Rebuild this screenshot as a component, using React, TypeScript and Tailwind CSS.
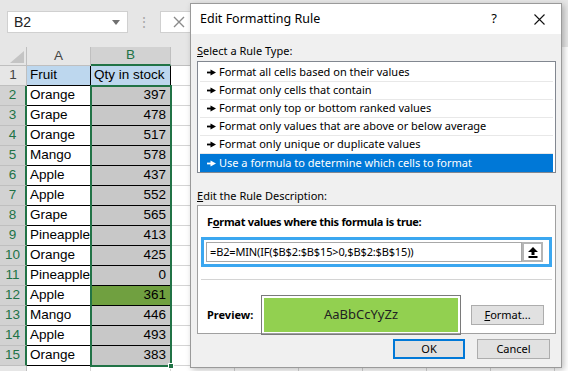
import React from 'react';

const rows: [string, string][] = [
    ['Orange', '397'],
    ['Grape', '478'],
    ['Orange', '517'],
    ['Mango', '578'],
    ['Apple', '437'],
    ['Apple', '552'],
    ['Grape', '565'],
    ['Pineapple', '413'],
    ['Orange', '425'],
    ['Pineapple', '0'],
    ['Apple', '361'],
    ['Mango', '446'],
    ['Apple', '493'],
    ['Orange', '383'],
];

const ruleTypes = [
    'Format all cells based on their values',
    'Format only cells that contain',
    'Format only top or bottom ranked values',
    'Format only values that are above or below average',
    'Format only unique or duplicate values',
    'Use a formula to determine which cells to format',
];

const extraCols = ['C', 'D', 'E', 'F', 'G', 'H'];

function Bullet({ white }: { white?: boolean }) {
    const c = white ? '#ffffff' : '#000000';
    return (
        <svg width="9" height="7" viewBox="0 0 9 7" className="shrink-0">
            <rect x="0" y="2.6" width="4" height="1.8" fill={c} />
            <polygon points="3.5,0.5 9,3.5 3.5,6.5" fill={c} />
        </svg>
    );
}

function Sheet() {
    return (
        <div className="w-[568px] h-[371px] overflow-hidden bg-white" style={{ fontFamily: '"Liberation Sans", Arial, sans-serif' }}>
            {/* formula bar */}
            <div className="h-[47px] bg-[#e6e6e6] flex items-start pt-[11px] pl-[7px]">
                <div className="w-[121px] h-[22px] bg-white border border-[#d0d0d0] flex items-center justify-between pl-[6px] pr-[7px] text-[14px] text-[#222]">
                    <span>B2</span>
                    <svg width="8" height="5" viewBox="0 0 8 5"><polygon points="0,0 8,0 4,5" fill="#707070" /></svg>
                </div>
                <div className="w-[32px] h-[22px] flex items-center justify-center text-[#a8a8a8] text-[14px]">⋮</div>
                <div className="w-[60px] h-[22px] bg-white border border-[#d0d0d0] flex items-center pl-[12px]">
                    <svg width="12" height="12" viewBox="0 0 12 12"><path d="M1 1L11 11M11 1L1 11" stroke="#8a8a8a" strokeWidth="1.4" /></svg>
                </div>
            </div>

            {/* column headers */}
            <div className="flex h-[19px] text-[13.5px]">
                <div className="w-[27px] shrink-0 bg-[#e6e6e6] border-r border-b border-[#bfbfbf] relative overflow-hidden">
                    <svg width="14" height="12" viewBox="0 0 14 12" className="absolute right-[2px] bottom-[2px]"><polygon points="14,0 14,12 0,12" fill="#c4c4c4" /></svg>
                </div>
                <div className="w-[64px] shrink-0 bg-[#e6e6e6] border-r border-b border-[#bfbfbf] flex items-center justify-center text-[#444]">A</div>
                <div className="w-[80px] shrink-0 bg-[#d2d2d2] border-r border-[#bfbfbf] border-b-2 border-b-[#217346] flex items-center justify-center text-[#217346]">B</div>
                {extraCols.map((c) => (
                    <div key={c} className="w-[64px] shrink-0 bg-[#e6e6e6] border-r border-b border-[#bfbfbf] flex items-center justify-center text-[#444]">{c}</div>
                ))}
            </div>

            {/* row 1 */}
            <div className="flex h-[20px] text-[13.5px]">
                <div className="w-[27px] shrink-0 bg-[#e6e6e6] border-r border-b border-[#bfbfbf] flex items-center justify-center text-[#444]">1</div>
                <div className="w-[64px] shrink-0 bg-[#bdd7ee] border-r border-b border-black flex items-center pl-[3px]">Fruit</div>
                <div className="w-[80px] shrink-0 bg-[#bdd7ee] border-r border-b border-black flex items-center pl-[3px] whitespace-nowrap overflow-hidden">Qty in stock</div>
                {extraCols.map((c) => (
                    <div key={c} className="w-[64px] shrink-0 border-r border-b border-[#d4d4d4]" />
                ))}
            </div>

            {/* data rows */}
            {rows.map(([fruit, qty], i) => (
                <div key={i} className="flex h-[20px] text-[13.5px]">
                    <div className="w-[27px] shrink-0 bg-[#d2d2d2] border-r-2 border-r-[#217346] border-b border-b-[#bfbfbf] flex items-center justify-center text-[#217346]">{i + 2}</div>
                    <div className="w-[64px] shrink-0 bg-white border-r border-b border-black flex items-center pl-[3px] overflow-hidden whitespace-nowrap">{fruit}</div>
                    <div className={`w-[80px] shrink-0 border-r border-b border-black flex items-center justify-end pr-[4px] ${qty === '361' ? 'bg-[#70a040]' : 'bg-[#c8c8c8]'}`}>{qty}</div>
                    {extraCols.map((c) => (
                        <div key={c} className="w-[64px] shrink-0 border-r border-b border-[#d4d4d4]" />
                    ))}
                </div>
            ))}
            <div className="flex h-[20px] text-[13.5px]">
                <div className="w-[27px] shrink-0 bg-[#e6e6e6] border-r border-b border-[#bfbfbf]" />
                <div className="w-[64px] shrink-0 border-r border-b border-[#d4d4d4]" />
                <div className="w-[80px] shrink-0 border-r border-b border-[#d4d4d4]" />
                {extraCols.map((c) => (
                    <div key={c} className="w-[64px] shrink-0 border-r border-b border-[#d4d4d4]" />
                ))}
            </div>
        </div>
    );
}

function Dialog() {
    return (
        <div
            className="absolute left-[190px] top-[3px] w-[372px] h-[365px] bg-[#f0f0f0] border border-[#9a9a9a] shadow-[2px_2px_6px_rgba(0,0,0,0.25)] flex flex-col text-[11px] text-black"
            style={{ fontFamily: '"Noto Sans", "Open Sans", sans-serif' }}
        >
            <div className="h-[30px] bg-white flex items-center pl-[9px] pr-[16px] shrink-0">
                <span className="text-[12.5px] flex-1">Edit Formatting Rule</span>
                <span className="text-[13px] mr-[37px]">?</span>
                <svg width="11" height="11" viewBox="0 0 11 11"><path d="M0.5 0.5L10.5 10.5M10.5 0.5L0.5 10.5" stroke="#111" strokeWidth="1.1" /></svg>
            </div>

            <div className="pl-[6px] pr-[5px] flex flex-col">
                <div className="h-[16px] mt-[9px] leading-[16px]"><span className="underline">S</span>elect a Rule Type:</div>
                <div className="mt-[2px] h-[112px] bg-white border border-[#828790] px-[2px] pt-[2px]">
                    {ruleTypes.map((t, i) => {
                        const sel = i === ruleTypes.length - 1;
                        return (
                            <div
                                key={t}
                                className={`h-[18px] flex items-center gap-[3px] pl-[7px] whitespace-nowrap ${sel ? 'bg-[#0078d7] text-white' : 'border-b border-[#e8e8e8]'}`}
                            >
                                <Bullet white={sel} />
                                <span>{t}</span>
                            </div>
                        );
                    })}
                </div>

                <div className="h-[16px] mt-[15px] leading-[16px]"><span className="underline">E</span>dit the Rule Description:</div>
                <div className="mt-[1px] h-[129px] bg-white border border-[#a0a0a0] flex flex-col">
                    <div className="pl-[9px] mt-[8px] h-[16px] leading-[16px] font-bold tracking-[-0.3px]">F<span className="underline">o</span>rmat values where this formula is true:</div>
                    <div className="ml-[3px] mr-[3px] mt-[7px] h-[30px] border-[3px] border-[#3ba7f0] p-[2px] flex">
                        <div className="flex-1 h-[20px] border border-[#a8a8a8] bg-white flex items-center pl-[3px] text-[11px] tracking-[-0.15px]">=B2=MIN(IF($B$2:$B$15&gt;0,$B$2:$B$15))</div>
                        <div className="w-[21px] h-[20px] bg-white border-2 border-[#b5b5b5] flex items-center justify-center">
                            <svg width="10" height="11" viewBox="0 0 10 11">
                                <polygon points="5,0 10,5 6.5,5 6.5,8 3.5,8 3.5,5 0,5" fill="#000" />
                                <rect x="0.5" y="9" width="9" height="2" fill="#000" />
                            </svg>
                        </div>
                        <div className="w-[4px]" />
                    </div>
                    <div className="mx-[3px] mt-[12px] border-t border-[#d4d4d4]" />
                    <div className="flex items-center mt-[15px] pl-[9px]">
                        <span className="font-bold w-[54px]">Preview:</span>
                        <div className="w-[200px] h-[40px] border border-[#7a7a7a] p-[2px]">
                            <div className="w-full h-full bg-[#92d050] flex items-center justify-center text-[13px] text-[#222]">AaBbCcYyZz</div>
                        </div>
                        <div className="ml-[10px] w-[73px] h-[20px] bg-[#e1e1e1] border border-[#adadad] flex items-center justify-center"><span className="underline">F</span>ormat...</div>
                    </div>
                </div>

                <div className="flex justify-end mt-[5px] mr-[6px] gap-[12px]">
                    <div className="w-[72px] h-[20px] bg-[#e1e1e1] border-2 border-[#0078d7] flex items-center justify-center">OK</div>
                    <div className="w-[73px] h-[20px] bg-[#e1e1e1] border border-[#adadad] flex items-center justify-center">Cancel</div>
                </div>
            </div>
        </div>
    );
}

export default function App() {
    return (
        <div className="relative w-[568px] h-[371px] overflow-hidden">
            <Sheet />
            {/* selection outline B2:B15 */}
            <div className="absolute left-[90px] top-[85px] w-[82px] h-[282px] border-2 border-[#217346] pointer-events-none" />
            <div className="absolute left-[168px] top-[363px] w-[6px] h-[6px] bg-[#217346] border border-white" />
            <Dialog />
        </div>
    );
}
